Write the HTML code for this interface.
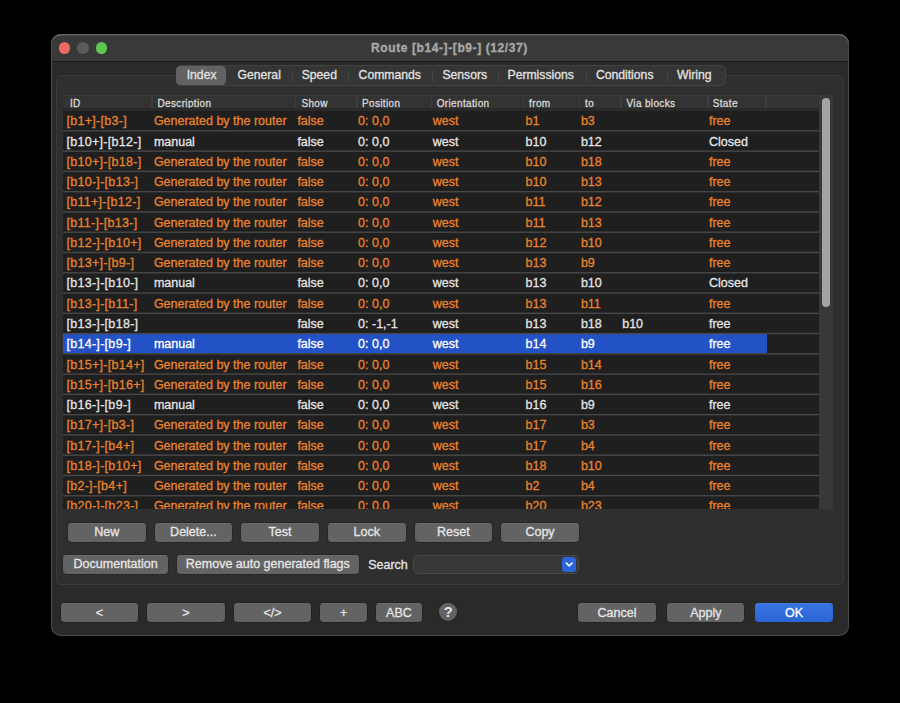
<!DOCTYPE html>
<html><head><meta charset="utf-8"><title>Route</title>
<style>
*{margin:0;padding:0;box-sizing:border-box}
html,body{width:900px;height:703px;background:#000;overflow:hidden}
body{position:relative;font-family:"Liberation Sans",sans-serif;color:#e4e4e4;-webkit-text-stroke:0.3px currentColor}
.a{position:absolute}
.t{position:absolute;white-space:nowrap;line-height:1}
.win{left:51px;top:34px;width:798px;height:602px;border-radius:10px;background:#2a2a2a;box-shadow:inset 0 0 0 1px #4a4a4a;overflow:hidden}
.tb{left:0;top:0;width:797px;height:26.5px;background:#383838;border-bottom:1px solid #1d1d1d}
.dot{position:absolute;width:11.6px;height:11.6px;border-radius:50%}
.title{font-weight:bold;font-size:12px;color:#a9a9a9;letter-spacing:0.6px}
.box{left:55.8px;top:74.5px;width:788.3px;height:510px;border-radius:5px;background:#2f2f2f;border:1px solid #3b3b3b}
.tabs{left:175.5px;top:65px;width:550.5px;height:20.7px;border-radius:5px;background:#353535;border:1px solid #424242}
.tab{font-size:12.2px;color:#e2e2e2}
.tsep{position:absolute;top:69.5px;width:1px;height:12px;background:#444}
.hdr{left:63.2px;top:95px;width:756px;height:14.7px;background:#333333;box-shadow:inset 0 1px 0 #3c3c3c}
.htx{font-size:10px;letter-spacing:0.35px;color:#d8d8d8}
.hsep{position:absolute;top:95.5px;width:1.6px;height:13px;background:#3e3e3e}
.clip{left:63.2px;top:109.7px;width:756px;height:399.6px;overflow:hidden;background:#1f1f1f}
.rsep{position:absolute;left:0;width:756px;height:1.3px;background:#464646}
.rt{font-size:12.5px}
.btn{position:absolute;border-radius:4px;background:#636363;box-shadow:inset 0 0.5px 0 #767676, 0 0 0 0.6px rgba(0,0,0,0.35);color:#e6e6e6;font-size:12.5px;text-align:center}
</style></head><body>

<div class="a win"></div>
<div class="a" style="left:51px;top:34px;width:798px;height:27px;border-radius:10px 10px 0 0;background:#393939;box-shadow:inset 0 1.5px 0 #626262, inset 1px 0 0 #4a4a4a, inset -1px 0 0 #4a4a4a"></div>
<div class="a" style="left:52px;top:60.5px;width:796px;height:1px;background:#1c1c1c"></div>
<div class="dot" style="left:58.8px;top:42.4px;background:#ec6a5f"></div>
<div class="dot" style="left:77.2px;top:42.4px;background:#5b5b5b"></div>
<div class="dot" style="left:95.7px;top:42.4px;background:#61c554"></div>
<div class="t title" style="left:371px;top:42.2px">Route [b14-]-[b9-] (12/37)</div>
<div class="a box"></div>
<div class="a tabs"></div>
<div class="a" style="left:176.1px;top:66.1px;width:50.3px;height:18.8px;border-radius:4.5px;background:#626262"></div>
<div class="t tab" style="left:186.7px;top:69.0px">Index</div>
<div class="t tab" style="left:237.5px;top:69.0px">General</div>
<div class="t tab" style="left:301.7px;top:69.0px">Speed</div>
<div class="t tab" style="left:358.6px;top:69.0px">Commands</div>
<div class="t tab" style="left:442.4px;top:69.0px">Sensors</div>
<div class="t tab" style="left:507.5px;top:69.0px">Permissions</div>
<div class="t tab" style="left:595.9px;top:69.0px">Conditions</div>
<div class="t tab" style="left:677px;top:69.0px">Wiring</div>
<div class="tsep" style="left:292px"></div>
<div class="tsep" style="left:347.8px"></div>
<div class="tsep" style="left:431.6px"></div>
<div class="tsep" style="left:497.8px"></div>
<div class="tsep" style="left:585.6px"></div>
<div class="tsep" style="left:666.7px"></div>
<div class="a hdr"></div>
<div class="hsep" style="left:151px"></div>
<div class="hsep" style="left:294.6px"></div>
<div class="hsep" style="left:356.2px"></div>
<div class="hsep" style="left:430.9px"></div>
<div class="hsep" style="left:522.7px"></div>
<div class="hsep" style="left:578.7px"></div>
<div class="hsep" style="left:620px"></div>
<div class="hsep" style="left:707.2px"></div>
<div class="hsep" style="left:765.3px"></div>
<div class="t htx" style="left:69.9px;top:98.9px">ID</div>
<div class="t htx" style="left:157.5px;top:98.9px">Description</div>
<div class="t htx" style="left:301.4px;top:98.9px">Show</div>
<div class="t htx" style="left:362px;top:98.9px">Position</div>
<div class="t htx" style="left:436.7px;top:98.9px">Orientation</div>
<div class="t htx" style="left:529.1px;top:98.9px">from</div>
<div class="t htx" style="left:585.1px;top:98.9px">to</div>
<div class="t htx" style="left:626.5px;top:98.9px">Via blocks</div>
<div class="t htx" style="left:712.7px;top:98.9px">State</div>
<div class="a clip">
<div class="t rt" style="left:3.2px;top:5.6px;color:#e8832c;letter-spacing:0.3px">[b1+]-[b3-]</div>
<div class="t rt" style="left:90.7px;top:5.6px;color:#e8832c">Generated by the router</div>
<div class="t rt" style="left:234.2px;top:5.6px;color:#e8832c">false</div>
<div class="t rt" style="left:294.9px;top:5.6px;color:#e8832c">0: 0,0</div>
<div class="t rt" style="left:369.5px;top:5.6px;color:#e8832c">west</div>
<div class="t rt" style="left:462.3px;top:5.6px;color:#e8832c">b1</div>
<div class="t rt" style="left:517.7px;top:5.6px;color:#e8832c">b3</div>
<div class="t rt" style="left:645.8px;top:5.6px;color:#e8832c">free</div>
<div class="t rt" style="left:3.2px;top:25.87px;color:#e4e4e4;letter-spacing:0.3px">[b10+]-[b12-]</div>
<div class="t rt" style="left:90.7px;top:25.87px;color:#e4e4e4">manual</div>
<div class="t rt" style="left:234.2px;top:25.87px;color:#e4e4e4">false</div>
<div class="t rt" style="left:294.9px;top:25.87px;color:#e4e4e4">0: 0,0</div>
<div class="t rt" style="left:369.5px;top:25.87px;color:#e4e4e4">west</div>
<div class="t rt" style="left:462.3px;top:25.87px;color:#e4e4e4">b10</div>
<div class="t rt" style="left:517.7px;top:25.87px;color:#e4e4e4">b12</div>
<div class="t rt" style="left:645.8px;top:25.87px;color:#e4e4e4">Closed</div>
<div class="t rt" style="left:3.2px;top:46.14px;color:#e8832c;letter-spacing:0.3px">[b10+]-[b18-]</div>
<div class="t rt" style="left:90.7px;top:46.14px;color:#e8832c">Generated by the router</div>
<div class="t rt" style="left:234.2px;top:46.14px;color:#e8832c">false</div>
<div class="t rt" style="left:294.9px;top:46.14px;color:#e8832c">0: 0,0</div>
<div class="t rt" style="left:369.5px;top:46.14px;color:#e8832c">west</div>
<div class="t rt" style="left:462.3px;top:46.14px;color:#e8832c">b10</div>
<div class="t rt" style="left:517.7px;top:46.14px;color:#e8832c">b18</div>
<div class="t rt" style="left:645.8px;top:46.14px;color:#e8832c">free</div>
<div class="t rt" style="left:3.2px;top:66.41px;color:#e8832c;letter-spacing:0.3px">[b10-]-[b13-]</div>
<div class="t rt" style="left:90.7px;top:66.41px;color:#e8832c">Generated by the router</div>
<div class="t rt" style="left:234.2px;top:66.41px;color:#e8832c">false</div>
<div class="t rt" style="left:294.9px;top:66.41px;color:#e8832c">0: 0,0</div>
<div class="t rt" style="left:369.5px;top:66.41px;color:#e8832c">west</div>
<div class="t rt" style="left:462.3px;top:66.41px;color:#e8832c">b10</div>
<div class="t rt" style="left:517.7px;top:66.41px;color:#e8832c">b13</div>
<div class="t rt" style="left:645.8px;top:66.41px;color:#e8832c">free</div>
<div class="t rt" style="left:3.2px;top:86.68px;color:#e8832c;letter-spacing:0.3px">[b11+]-[b12-]</div>
<div class="t rt" style="left:90.7px;top:86.68px;color:#e8832c">Generated by the router</div>
<div class="t rt" style="left:234.2px;top:86.68px;color:#e8832c">false</div>
<div class="t rt" style="left:294.9px;top:86.68px;color:#e8832c">0: 0,0</div>
<div class="t rt" style="left:369.5px;top:86.68px;color:#e8832c">west</div>
<div class="t rt" style="left:462.3px;top:86.68px;color:#e8832c">b11</div>
<div class="t rt" style="left:517.7px;top:86.68px;color:#e8832c">b12</div>
<div class="t rt" style="left:645.8px;top:86.68px;color:#e8832c">free</div>
<div class="t rt" style="left:3.2px;top:106.95px;color:#e8832c;letter-spacing:0.3px">[b11-]-[b13-]</div>
<div class="t rt" style="left:90.7px;top:106.95px;color:#e8832c">Generated by the router</div>
<div class="t rt" style="left:234.2px;top:106.95px;color:#e8832c">false</div>
<div class="t rt" style="left:294.9px;top:106.95px;color:#e8832c">0: 0,0</div>
<div class="t rt" style="left:369.5px;top:106.95px;color:#e8832c">west</div>
<div class="t rt" style="left:462.3px;top:106.95px;color:#e8832c">b11</div>
<div class="t rt" style="left:517.7px;top:106.95px;color:#e8832c">b13</div>
<div class="t rt" style="left:645.8px;top:106.95px;color:#e8832c">free</div>
<div class="t rt" style="left:3.2px;top:127.22px;color:#e8832c;letter-spacing:0.3px">[b12-]-[b10+]</div>
<div class="t rt" style="left:90.7px;top:127.22px;color:#e8832c">Generated by the router</div>
<div class="t rt" style="left:234.2px;top:127.22px;color:#e8832c">false</div>
<div class="t rt" style="left:294.9px;top:127.22px;color:#e8832c">0: 0,0</div>
<div class="t rt" style="left:369.5px;top:127.22px;color:#e8832c">west</div>
<div class="t rt" style="left:462.3px;top:127.22px;color:#e8832c">b12</div>
<div class="t rt" style="left:517.7px;top:127.22px;color:#e8832c">b10</div>
<div class="t rt" style="left:645.8px;top:127.22px;color:#e8832c">free</div>
<div class="t rt" style="left:3.2px;top:147.49px;color:#e8832c;letter-spacing:0.3px">[b13+]-[b9-]</div>
<div class="t rt" style="left:90.7px;top:147.49px;color:#e8832c">Generated by the router</div>
<div class="t rt" style="left:234.2px;top:147.49px;color:#e8832c">false</div>
<div class="t rt" style="left:294.9px;top:147.49px;color:#e8832c">0: 0,0</div>
<div class="t rt" style="left:369.5px;top:147.49px;color:#e8832c">west</div>
<div class="t rt" style="left:462.3px;top:147.49px;color:#e8832c">b13</div>
<div class="t rt" style="left:517.7px;top:147.49px;color:#e8832c">b9</div>
<div class="t rt" style="left:645.8px;top:147.49px;color:#e8832c">free</div>
<div class="t rt" style="left:3.2px;top:167.76px;color:#e4e4e4;letter-spacing:0.3px">[b13-]-[b10-]</div>
<div class="t rt" style="left:90.7px;top:167.76px;color:#e4e4e4">manual</div>
<div class="t rt" style="left:234.2px;top:167.76px;color:#e4e4e4">false</div>
<div class="t rt" style="left:294.9px;top:167.76px;color:#e4e4e4">0: 0,0</div>
<div class="t rt" style="left:369.5px;top:167.76px;color:#e4e4e4">west</div>
<div class="t rt" style="left:462.3px;top:167.76px;color:#e4e4e4">b13</div>
<div class="t rt" style="left:517.7px;top:167.76px;color:#e4e4e4">b10</div>
<div class="t rt" style="left:645.8px;top:167.76px;color:#e4e4e4">Closed</div>
<div class="t rt" style="left:3.2px;top:188.03px;color:#e8832c;letter-spacing:0.3px">[b13-]-[b11-]</div>
<div class="t rt" style="left:90.7px;top:188.03px;color:#e8832c">Generated by the router</div>
<div class="t rt" style="left:234.2px;top:188.03px;color:#e8832c">false</div>
<div class="t rt" style="left:294.9px;top:188.03px;color:#e8832c">0: 0,0</div>
<div class="t rt" style="left:369.5px;top:188.03px;color:#e8832c">west</div>
<div class="t rt" style="left:462.3px;top:188.03px;color:#e8832c">b13</div>
<div class="t rt" style="left:517.7px;top:188.03px;color:#e8832c">b11</div>
<div class="t rt" style="left:645.8px;top:188.03px;color:#e8832c">free</div>
<div class="t rt" style="left:3.2px;top:208.3px;color:#e4e4e4;letter-spacing:0.3px">[b13-]-[b18-]</div>
<div class="t rt" style="left:234.2px;top:208.3px;color:#e4e4e4">false</div>
<div class="t rt" style="left:294.9px;top:208.3px;color:#e4e4e4">0: -1,-1</div>
<div class="t rt" style="left:369.5px;top:208.3px;color:#e4e4e4">west</div>
<div class="t rt" style="left:462.3px;top:208.3px;color:#e4e4e4">b13</div>
<div class="t rt" style="left:517.7px;top:208.3px;color:#e4e4e4">b18</div>
<div class="t rt" style="left:559px;top:208.3px;color:#e4e4e4">b10</div>
<div class="t rt" style="left:645.8px;top:208.3px;color:#e4e4e4">free</div>
<div class="a" style="left:0;top:223.27px;width:703.4px;height:20px;background:#2352c7"></div>
<div class="t rt" style="left:3.2px;top:228.57px;color:#ffffff;letter-spacing:0.3px">[b14-]-[b9-]</div>
<div class="t rt" style="left:90.7px;top:228.57px;color:#ffffff">manual</div>
<div class="t rt" style="left:234.2px;top:228.57px;color:#ffffff">false</div>
<div class="t rt" style="left:294.9px;top:228.57px;color:#ffffff">0: 0,0</div>
<div class="t rt" style="left:369.5px;top:228.57px;color:#ffffff">west</div>
<div class="t rt" style="left:462.3px;top:228.57px;color:#ffffff">b14</div>
<div class="t rt" style="left:517.7px;top:228.57px;color:#ffffff">b9</div>
<div class="t rt" style="left:645.8px;top:228.57px;color:#ffffff">free</div>
<div class="t rt" style="left:3.2px;top:248.84px;color:#e8832c;letter-spacing:0.3px">[b15+]-[b14+]</div>
<div class="t rt" style="left:90.7px;top:248.84px;color:#e8832c">Generated by the router</div>
<div class="t rt" style="left:234.2px;top:248.84px;color:#e8832c">false</div>
<div class="t rt" style="left:294.9px;top:248.84px;color:#e8832c">0: 0,0</div>
<div class="t rt" style="left:369.5px;top:248.84px;color:#e8832c">west</div>
<div class="t rt" style="left:462.3px;top:248.84px;color:#e8832c">b15</div>
<div class="t rt" style="left:517.7px;top:248.84px;color:#e8832c">b14</div>
<div class="t rt" style="left:645.8px;top:248.84px;color:#e8832c">free</div>
<div class="t rt" style="left:3.2px;top:269.11px;color:#e8832c;letter-spacing:0.3px">[b15+]-[b16+]</div>
<div class="t rt" style="left:90.7px;top:269.11px;color:#e8832c">Generated by the router</div>
<div class="t rt" style="left:234.2px;top:269.11px;color:#e8832c">false</div>
<div class="t rt" style="left:294.9px;top:269.11px;color:#e8832c">0: 0,0</div>
<div class="t rt" style="left:369.5px;top:269.11px;color:#e8832c">west</div>
<div class="t rt" style="left:462.3px;top:269.11px;color:#e8832c">b15</div>
<div class="t rt" style="left:517.7px;top:269.11px;color:#e8832c">b16</div>
<div class="t rt" style="left:645.8px;top:269.11px;color:#e8832c">free</div>
<div class="t rt" style="left:3.2px;top:289.38px;color:#e4e4e4;letter-spacing:0.3px">[b16-]-[b9-]</div>
<div class="t rt" style="left:90.7px;top:289.38px;color:#e4e4e4">manual</div>
<div class="t rt" style="left:234.2px;top:289.38px;color:#e4e4e4">false</div>
<div class="t rt" style="left:294.9px;top:289.38px;color:#e4e4e4">0: 0,0</div>
<div class="t rt" style="left:369.5px;top:289.38px;color:#e4e4e4">west</div>
<div class="t rt" style="left:462.3px;top:289.38px;color:#e4e4e4">b16</div>
<div class="t rt" style="left:517.7px;top:289.38px;color:#e4e4e4">b9</div>
<div class="t rt" style="left:645.8px;top:289.38px;color:#e4e4e4">free</div>
<div class="t rt" style="left:3.2px;top:309.65px;color:#e8832c;letter-spacing:0.3px">[b17+]-[b3-]</div>
<div class="t rt" style="left:90.7px;top:309.65px;color:#e8832c">Generated by the router</div>
<div class="t rt" style="left:234.2px;top:309.65px;color:#e8832c">false</div>
<div class="t rt" style="left:294.9px;top:309.65px;color:#e8832c">0: 0,0</div>
<div class="t rt" style="left:369.5px;top:309.65px;color:#e8832c">west</div>
<div class="t rt" style="left:462.3px;top:309.65px;color:#e8832c">b17</div>
<div class="t rt" style="left:517.7px;top:309.65px;color:#e8832c">b3</div>
<div class="t rt" style="left:645.8px;top:309.65px;color:#e8832c">free</div>
<div class="t rt" style="left:3.2px;top:329.92px;color:#e8832c;letter-spacing:0.3px">[b17-]-[b4+]</div>
<div class="t rt" style="left:90.7px;top:329.92px;color:#e8832c">Generated by the router</div>
<div class="t rt" style="left:234.2px;top:329.92px;color:#e8832c">false</div>
<div class="t rt" style="left:294.9px;top:329.92px;color:#e8832c">0: 0,0</div>
<div class="t rt" style="left:369.5px;top:329.92px;color:#e8832c">west</div>
<div class="t rt" style="left:462.3px;top:329.92px;color:#e8832c">b17</div>
<div class="t rt" style="left:517.7px;top:329.92px;color:#e8832c">b4</div>
<div class="t rt" style="left:645.8px;top:329.92px;color:#e8832c">free</div>
<div class="t rt" style="left:3.2px;top:350.19px;color:#e8832c;letter-spacing:0.3px">[b18-]-[b10+]</div>
<div class="t rt" style="left:90.7px;top:350.19px;color:#e8832c">Generated by the router</div>
<div class="t rt" style="left:234.2px;top:350.19px;color:#e8832c">false</div>
<div class="t rt" style="left:294.9px;top:350.19px;color:#e8832c">0: 0,0</div>
<div class="t rt" style="left:369.5px;top:350.19px;color:#e8832c">west</div>
<div class="t rt" style="left:462.3px;top:350.19px;color:#e8832c">b18</div>
<div class="t rt" style="left:517.7px;top:350.19px;color:#e8832c">b10</div>
<div class="t rt" style="left:645.8px;top:350.19px;color:#e8832c">free</div>
<div class="t rt" style="left:3.2px;top:370.46px;color:#e8832c;letter-spacing:0.3px">[b2-]-[b4+]</div>
<div class="t rt" style="left:90.7px;top:370.46px;color:#e8832c">Generated by the router</div>
<div class="t rt" style="left:234.2px;top:370.46px;color:#e8832c">false</div>
<div class="t rt" style="left:294.9px;top:370.46px;color:#e8832c">0: 0,0</div>
<div class="t rt" style="left:369.5px;top:370.46px;color:#e8832c">west</div>
<div class="t rt" style="left:462.3px;top:370.46px;color:#e8832c">b2</div>
<div class="t rt" style="left:517.7px;top:370.46px;color:#e8832c">b4</div>
<div class="t rt" style="left:645.8px;top:370.46px;color:#e8832c">free</div>
<div class="t rt" style="left:3.2px;top:390.73px;color:#e8832c;letter-spacing:0.3px">[b20-]-[b23-]</div>
<div class="t rt" style="left:90.7px;top:390.73px;color:#e8832c">Generated by the router</div>
<div class="t rt" style="left:234.2px;top:390.73px;color:#e8832c">false</div>
<div class="t rt" style="left:294.9px;top:390.73px;color:#e8832c">0: 0,0</div>
<div class="t rt" style="left:369.5px;top:390.73px;color:#e8832c">west</div>
<div class="t rt" style="left:462.3px;top:390.73px;color:#e8832c">b20</div>
<div class="t rt" style="left:517.7px;top:390.73px;color:#e8832c">b23</div>
<div class="t rt" style="left:645.8px;top:390.73px;color:#e8832c">free</div>
<svg class="a" style="left:0;top:0" width="756" height="400" viewBox="0 0 756 400"><rect x="0" y="20.17" width="756" height="1.4" fill="#484848"/><rect x="0" y="40.44" width="756" height="1.4" fill="#484848"/><rect x="0" y="60.71" width="756" height="1.4" fill="#484848"/><rect x="0" y="80.98" width="756" height="1.4" fill="#484848"/><rect x="0" y="101.25" width="756" height="1.4" fill="#484848"/><rect x="0" y="121.52" width="756" height="1.4" fill="#484848"/><rect x="0" y="141.79" width="756" height="1.4" fill="#484848"/><rect x="0" y="162.06" width="756" height="1.4" fill="#484848"/><rect x="0" y="182.33" width="756" height="1.4" fill="#484848"/><rect x="0" y="202.6" width="756" height="1.4" fill="#484848"/><rect x="0" y="222.87" width="756" height="1.4" fill="#484848"/><rect x="0" y="243.14" width="756" height="1.4" fill="#484848"/><rect x="0" y="263.41" width="756" height="1.4" fill="#484848"/><rect x="0" y="283.68" width="756" height="1.4" fill="#484848"/><rect x="0" y="303.95" width="756" height="1.4" fill="#484848"/><rect x="0" y="324.22" width="756" height="1.4" fill="#484848"/><rect x="0" y="344.49" width="756" height="1.4" fill="#484848"/><rect x="0" y="364.76" width="756" height="1.4" fill="#484848"/><rect x="0" y="385.03" width="756" height="1.4" fill="#484848"/><rect x="0" y="405.3" width="756" height="1.4" fill="#484848"/></svg>
</div>
<div class="a" style="left:63.2px;top:108px;width:756px;height:3px;background:#2a2a2a"></div>
<div class="a" style="left:819.2px;top:95px;width:13.7px;height:414.3px;background:#383838"></div>
<div class="a" style="left:822.3px;top:97.5px;width:7.8px;height:209.6px;border-radius:4px;background:#a3a3a3"></div>
<div class="btn" style="left:67.9px;top:523.2px;width:77.7px;height:18.5px;line-height:18.5px">New</div>
<div class="btn" style="left:154.56px;top:523.2px;width:77.7px;height:18.5px;line-height:18.5px">Delete...</div>
<div class="btn" style="left:241.22px;top:523.2px;width:77.7px;height:18.5px;line-height:18.5px">Test</div>
<div class="btn" style="left:327.88px;top:523.2px;width:77.7px;height:18.5px;line-height:18.5px">Lock</div>
<div class="btn" style="left:414.54px;top:523.2px;width:77.7px;height:18.5px;line-height:18.5px">Reset</div>
<div class="btn" style="left:501.2px;top:523.2px;width:77.7px;height:18.5px;line-height:18.5px">Copy</div>
<div class="btn" style="left:63.4px;top:555px;width:104.5px;height:18.9px;line-height:18.9px">Documentation</div>
<div class="btn" style="left:176.8px;top:555px;width:182px;height:18.9px;line-height:18.9px">Remove auto generated flags</div>
<div class="t" style="left:368.2px;top:558.6px;font-size:12.5px;color:#e4e4e4">Search</div>
<div class="a" style="left:412.7px;top:554.9px;width:166.3px;height:19px;border-radius:5px;background:#383838;border:1px solid #484848"></div>
<div class="a" style="left:562.1px;top:557.2px;width:14.4px;height:14.6px;border-radius:3.5px;background:#2b63db"></div>
<svg class="a" style="left:562.1px;top:557.2px" width="14.4" height="14.6" viewBox="0 0 14.4 14.6"><path d="M4.4 6.1 L7.2 8.9 L10 6.1" fill="none" stroke="#fff" stroke-width="1.5" stroke-linecap="round" stroke-linejoin="round"/></svg>
<div class="btn" style="left:60.7px;top:602.9px;width:77.3px;height:19px;line-height:20px">&lt;</div>
<div class="btn" style="left:147.3px;top:602.9px;width:77.4px;height:19px;line-height:20px">&gt;</div>
<div class="btn" style="left:234px;top:602.9px;width:77.1px;height:19px;line-height:20px">&lt;/&gt;</div>
<div class="btn" style="left:320.4px;top:602.9px;width:46.3px;height:19px;line-height:20px">+</div>
<div class="btn" style="left:376px;top:602.9px;width:45.8px;height:19px;line-height:20px">ABC</div>
<div class="btn" style="left:578.4px;top:602.9px;width:77.3px;height:19px;line-height:20px">Cancel</div>
<div class="btn" style="left:667.3px;top:602.9px;width:77px;height:19px;line-height:20px">Apply</div>
<div class="btn" style="left:755.3px;top:602.9px;width:77.3px;height:19px;line-height:20px;background:linear-gradient(#3776e0,#2a64d6);box-shadow:inset 0 0.5px 0 #4a82e4;color:#fff">OK</div>
<div class="btn" style="left:438.9px;top:602.8px;width:18.5px;height:18.5px;border-radius:50%;line-height:19.4px;font-size:14.8px;font-weight:bold;-webkit-text-stroke:0;text-indent:0.4px">?</div>
</body></html>
